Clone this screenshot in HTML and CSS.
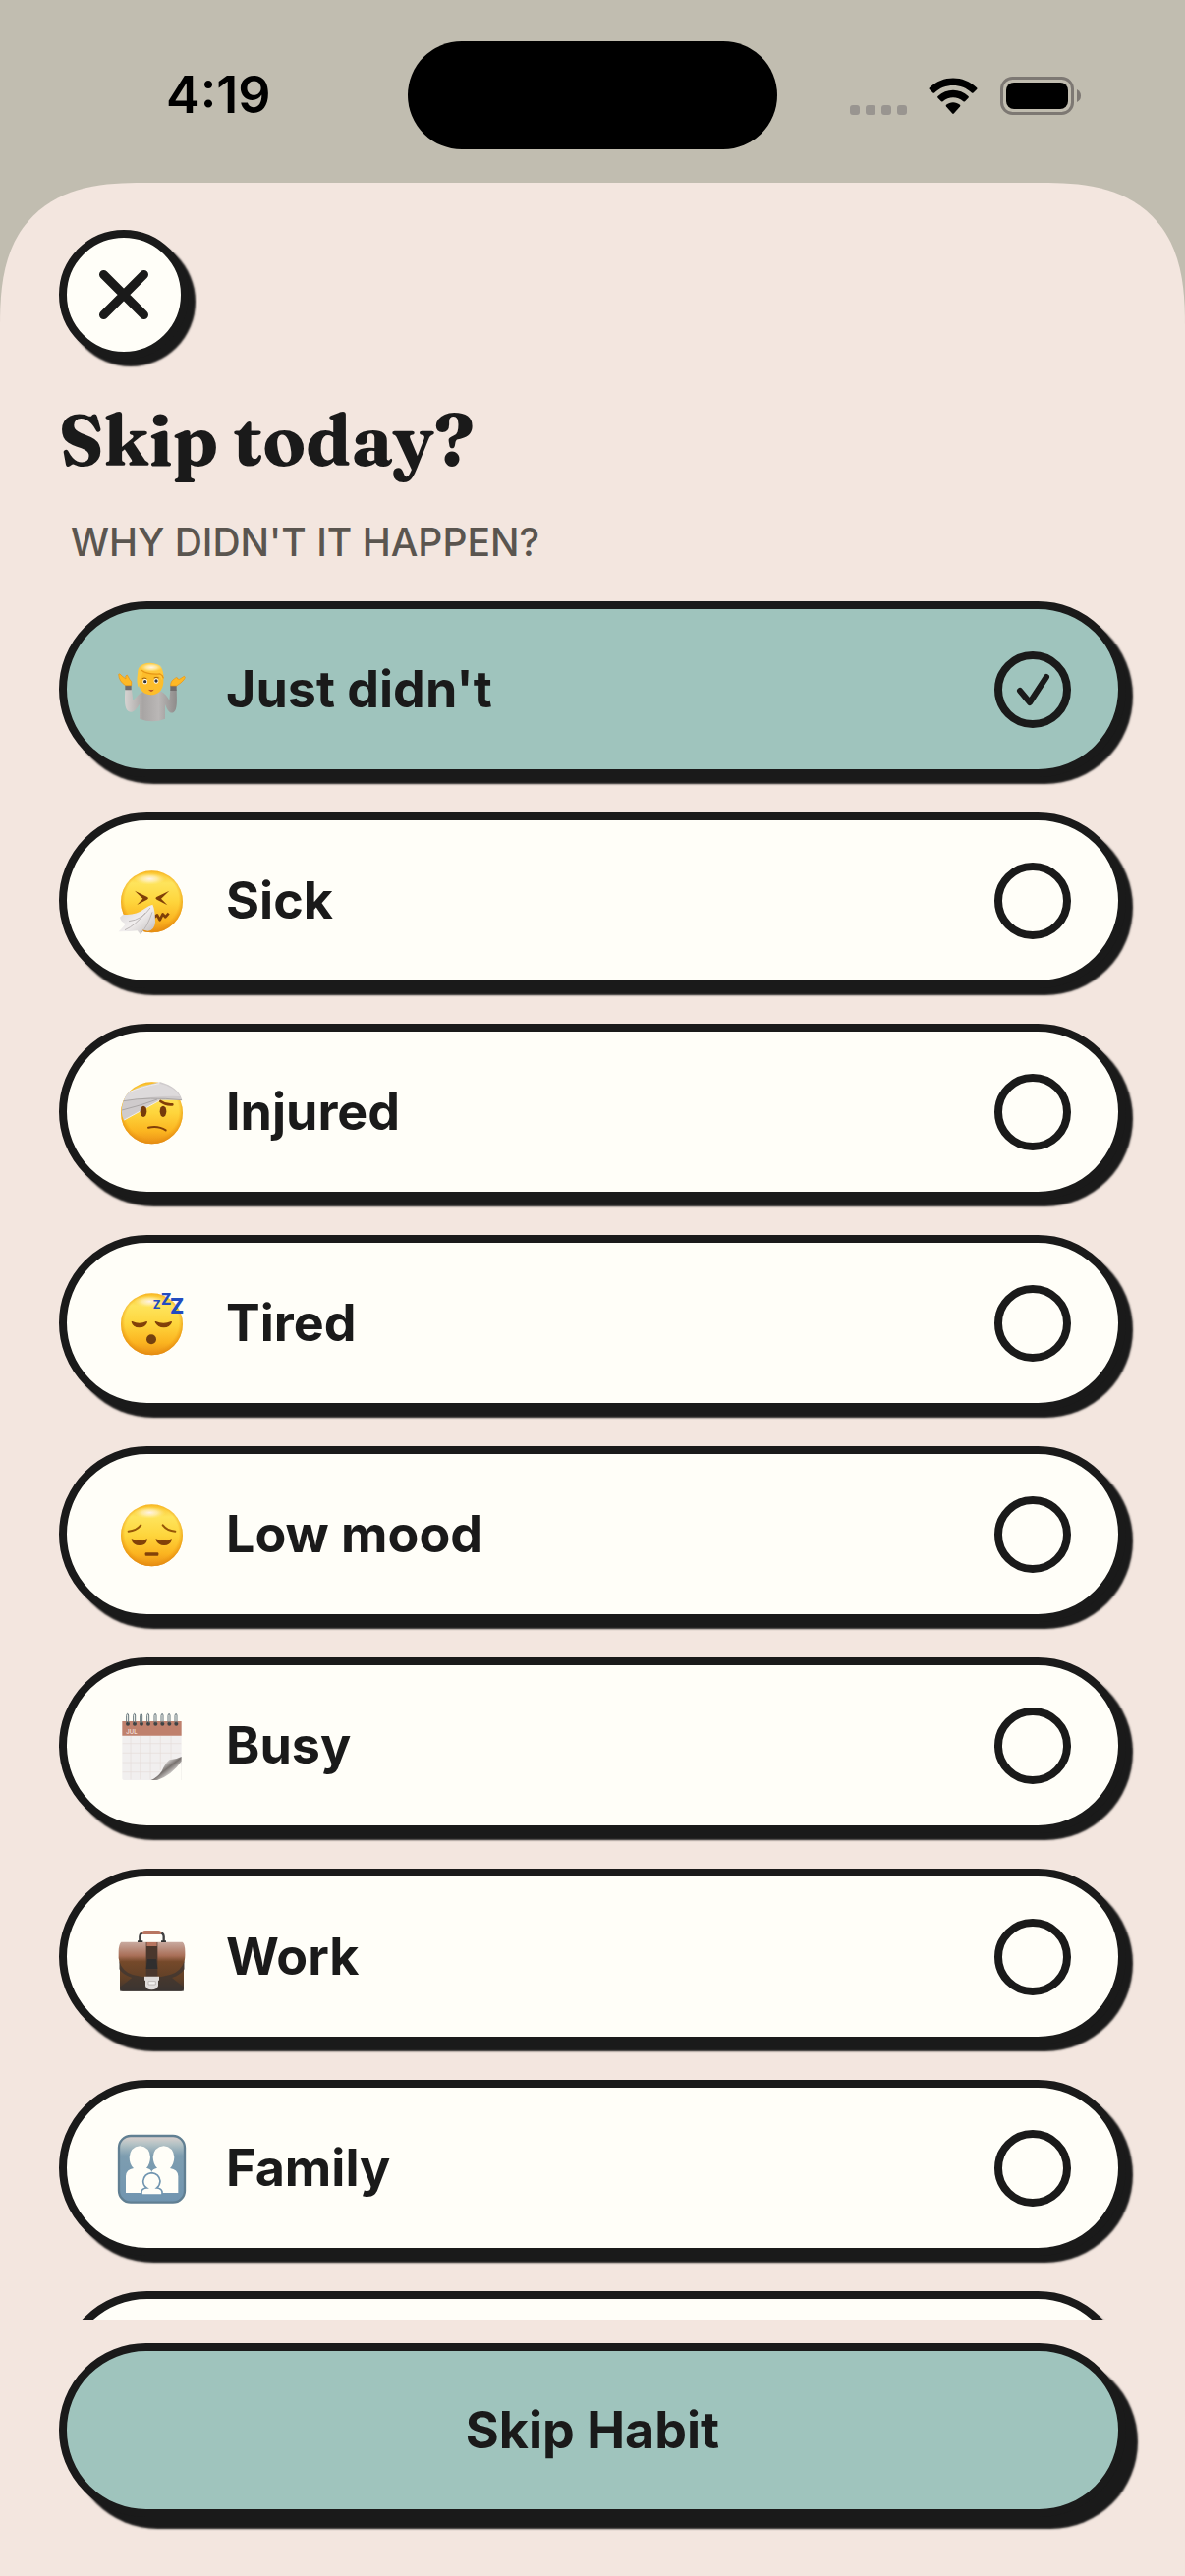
FILE: index.html
```html
<!DOCTYPE html>
<html lang="en">
<head>
<meta charset="utf-8">
<meta name="viewport" content="width=device-width, initial-scale=1">
<title>Skip today?</title>
<link rel="stylesheet" href="styles.css">
</head>
<body>
<div class="screen">
  <header class="status">
    <time class="status-time">4:19</time>
    <div class="island"></div>
    <div class="status-icons">
      <svg class="dots" viewBox="0 0 58 10" aria-hidden="true">
        <rect width="10" height="10" rx="3"/><rect x="16" width="10" height="10" rx="3"/><rect x="32" width="10" height="10" rx="3"/><rect x="48" width="10" height="10" rx="3"/>
      </svg>
      <svg class="wifi" viewBox="0 0 50 38" aria-hidden="true">
        <path d="M1 10.200Q0 11 .9 12L4.500 15.500Q5.300 16.200 6.100 15.400C16.500 5.600 33.500 5.600 43.900 15.400Q44.700 16.200 45.500 15.500L49.100 12Q50 11 49 10.200C35.500-2.700 14.500-2.700 1 10.200Z"/>
        <path d="M9.500 19Q8.600 19.800 9.500 20.700L13 24.200Q13.800 25 14.600 24.200C20.500 19 29.500 19 35.400 24.200Q36.200 25 37 24.200L40.500 20.700Q41.400 19.800 40.500 19C31.500 10.800 18.500 10.800 9.500 19Z"/>
        <path d="M18 27.800Q17.200 28.700 18 29.600L24.200 36.500Q25 37.300 25.800 36.500L32 29.600Q32.800 28.700 32 27.800C28 24.400 22 24.400 18 27.800Z"/>
      </svg>
      <svg class="battery" viewBox="0 0 82 39" aria-hidden="true">
        <rect x="1.500" y="1.500" width="72" height="36" rx="11" fill="none" stroke="#7d7873" stroke-width="3"/>
        <rect x="6" y="6" width="63" height="27" rx="8"/>
        <path d="M78 13Q82 15 82 19.500T78 26Z" fill="#7d7873"/>
      </svg>
    </div>
  </header>

  <main class="sheet">
    <div class="sheet-head">
      <button class="close" type="button" aria-label="Close">
        <svg viewBox="0 0 52 52" aria-hidden="true"><path d="M5.500 5.500 46.500 46.500M46.500 5.500 5.500 46.500"/></svg>
      </button>
      <h1 class="title">Skip today?</h1>
      <p class="caption" id="reason-caption">WHY DIDN'T IT HAPPEN?</p>
    </div>

    <svg class="defs" aria-hidden="true">
      <defs>
        <linearGradient id="face" x1="0" y1="0" x2="0" y2="1">
          <stop offset="0" stop-color="#fbc02a"/><stop offset=".2" stop-color="#fee45c"/><stop offset=".5" stop-color="#fed53c"/><stop offset=".8" stop-color="#fbb420"/><stop offset="1" stop-color="#e98e16"/>
        </linearGradient>
        <radialGradient id="edge" cx=".5" cy=".47" r=".53">
          <stop offset=".82" stop-color="#f09a12" stop-opacity="0"/><stop offset="1" stop-color="#e28a10" stop-opacity=".85"/>
        </radialGradient>
        <radialGradient id="shine">
          <stop offset="0" stop-color="#fff3ea"/><stop offset=".5" stop-color="#fff2c0" stop-opacity=".7"/><stop offset="1" stop-color="#ffec90" stop-opacity="0"/>
        </radialGradient>
        <linearGradient id="shirt" x1="0" x2="1">
          <stop offset="0" stop-color="#d6d3d1"/><stop offset=".35" stop-color="#a8a5a4"/><stop offset=".65" stop-color="#bab7b6"/><stop offset="1" stop-color="#8e8b8a"/>
        </linearGradient>
        <linearGradient id="cloth" x1="0" y1="0" x2="1" y2="1">
          <stop offset="0" stop-color="#d5d2d3"/><stop offset=".5" stop-color="#f1eeee"/><stop offset="1" stop-color="#bdb9b9"/>
        </linearGradient>
        <linearGradient id="curl" x1="0" y1="0" x2="1" y2="1">
          <stop offset=".3" stop-color="#f5f3f2"/><stop offset=".52" stop-color="#77716e"/><stop offset=".7" stop-color="#d9d6d4"/>
        </linearGradient>
        <linearGradient id="leather" x1="0" y1="0" x2="0" y2="1">
          <stop offset="0" stop-color="#c9aaa0"/><stop offset=".28" stop-color="#a96f58"/><stop offset=".4" stop-color="#75492a"/><stop offset=".75" stop-color="#604027"/><stop offset="1" stop-color="#3b3431"/>
        </linearGradient>
        <linearGradient id="tile" x1="0" y1="0" x2="0" y2="1">
          <stop offset="0" stop-color="#ded1cf"/><stop offset=".12" stop-color="#b5c3c5"/><stop offset=".3" stop-color="#7d9db0"/><stop offset="1" stop-color="#7195b0"/>
        </linearGradient>
        <g id="head">
          <circle cx="163.500" cy="172.500" r="94.500" fill="url(#face)"/>
          <circle cx="163.500" cy="172.500" r="94.500" fill="url(#edge)"/>
          <ellipse cx="157" cy="103" rx="48" ry="18" fill="url(#shine)"/>
        </g>
      </defs>
    </svg>

    <div class="reasons" role="radiogroup" aria-labelledby="reason-caption">
      <label class="reason">
        <svg class="emoji" viewBox="48 68 228 228" aria-hidden="true">
          <path d="M82 181C80 215 80 238 91 247 102 256 113 247 126 226V271Q166 286 204 271V227C211 246 220 257 230 251 242 243 240 215 239 181H220L217 214C208 198 198 188 184 185H144C128 190 118 202 106 216L102 181Z" fill="url(#shirt)"/>
          <path d="M82 168H101V183H82ZM220 170H239V185H220Z" fill="#706c6c"/>
          <path d="M83 169Q63 157 62 135 65 130 72 140L84 149Q81 137 88 137L96 151Q104 155 101 169ZM221 170Q220 156 232 149 242 140 242 149L248 150 262 141Q268 143 261 152 254 161 239 170Z" fill="#ffb925" stroke="#e99413" stroke-width="2"/>
          <path d="M141 170H181V188Q161 207 141 188Z" fill="#e49821"/>
          <path d="M123 133Q130 102 160 103 193 105 199 135V161Q194 198 160 198 124 194 124 158Z" fill="#fdbd2b"/>
          <path d="M124 176Q115 163 120 133 119 112 138 104 160 96 180 105 199 111 199 145L194 152Q191 137 166 134 143 132 136 123 135 143 127 151Z" fill="#ffc83c"/>
          <path d="M132 123Q151 137 189 134 197 137 199 147" fill="none" stroke="#e69515" stroke-width="4"/>
          <ellipse cx="162" cy="114" rx="34" ry="13" fill="url(#shine)"/>
          <ellipse cx="143" cy="157" rx="7" ry="8" fill="#fffdf2"/><ellipse cx="177" cy="155" rx="7" ry="8" fill="#fffdf2"/>
          <circle cx="143" cy="157" r="5" fill="#343238"/><circle cx="177" cy="155" r="5" fill="#343238"/>
          <path d="M134 148Q141 144 148 148M170 146Q177 142 185 146" fill="none" stroke="#a06010" stroke-width="3"/>
          <path d="M153 181Q161 184 170 181Q166 188 161 187T153 181Z" fill="#a73c24"/>
        </svg>
        <span class="reason-name">Just didn't</span>
        <span class="mark">
          <input class="radio" type="radio" name="reason" checked>
          <svg class="tick" viewBox="0 0 78 78" aria-hidden="true"><path d="M26 40 36 52 53 26"/></svg>
        </span>
      </label>

      <label class="reason">
        <svg class="emoji" viewBox="48 56 228 228" aria-hidden="true">
          <use href="#head"/>
          <path d="M111 139 150 158Q156 162 149 166L118 182 136 163ZM217 139 178 158Q172 162 179 166L211 183 192 163Z" fill="#803f08"/>
          <path d="M168 222 180 213 188 228 197 210 205 219 215 208" fill="none" stroke="#803f08" stroke-width="8" stroke-linejoin="round"/>
          <path d="M166 181Q174 198 174 235 172 260 151 262L136 258 130 274 119 261Q94 264 62 264 79 248 83 240 68 232 66 220L76 211Q113 215 141 194 155 183 166 181Z" fill="url(#cloth)"/>
          <path d="M159 191Q133 228 93 232M165 204Q151 247 131 268M144 206Q114 244 81 259" fill="none" stroke="#bbb6b6" stroke-width="3"/>
        </svg>
        <span class="reason-name">Sick</span>
        <span class="mark"><input class="radio" type="radio" name="reason"></span>
      </label>

      <label class="reason">
        <svg class="emoji" viewBox="48 56 228 228" aria-hidden="true">
          <use href="#head"/>
          <path d="M94 108Q131 89 190 78 244 93 256 133L188 133 78 195Q66 170 76 139 81 121 94 108Z" fill="#cfcbcc"/>
          <path d="M94 110Q140 91 187 82 231 91 250 122 180 119 78 136 82 120 94 110Z" fill="#dddadb"/>
          <path d="M77 136Q155 122 255 133M72 164Q130 150 180 131" fill="none" stroke="#aaa6a6" stroke-width="3"/>
          <path d="M92 110Q133 92 187 82M79 194 188 134" fill="none" stroke="#f1eeee" stroke-width="3"/>
          <path d="M190 137Q206 149 226 147" fill="none" stroke="#823f08" stroke-width="8" stroke-linecap="round"/>
          <ellipse cx="138" cy="168" rx="10" ry="17" fill="#753b0b"/><ellipse cx="198" cy="168" rx="10" ry="17" fill="#753b0b"/>
          <path d="M153 217Q183 210 206 225" fill="none" stroke="#823f08" stroke-width="6" stroke-linecap="round"/>
        </svg>
        <span class="reason-name">Injured</span>
        <span class="mark"><input class="radio" type="radio" name="reason"></span>
      </label>

      <label class="reason">
        <svg class="emoji" viewBox="48 56 228 228" aria-hidden="true">
          <use href="#head"/>
          <path d="M103 166Q125 176 148 166Q143 181 125 181T103 166ZM175 166Q199 176 223 166Q217 181 200 181T175 166Z" fill="#824109" stroke="#824109" stroke-width="4" stroke-linejoin="round"/>
          <circle cx="162" cy="219" r="15" fill="#74400f"/>
          <g class="snore"><text x="167" y="125" font-size="34">Z</text><text x="192" y="112" font-size="46">Z</text><text x="219" y="141" font-size="63">Z</text></g>
        </svg>
        <span class="reason-name">Tired</span>
        <span class="mark"><input class="radio" type="radio" name="reason"></span>
      </label>

      <label class="reason">
        <svg class="emoji" viewBox="48 56 228 228" aria-hidden="true">
          <use href="#head"/>
          <path d="M92 160Q116 158 130 141M235 160Q210 158 197 141" fill="none" stroke="#965607" stroke-width="6" stroke-linecap="round"/>
          <path d="M103 185Q125 195 148 185Q144 201 126 201T103 185ZM177 185Q199 195 223 185Q218 201 201 201T177 185Z" fill="#824109" stroke="#824109" stroke-width="4" stroke-linejoin="round"/>
          <rect x="143" y="225" width="41" height="10" rx="3" fill="#824109"/>
        </svg>
        <span class="reason-name">Low mood</span>
        <span class="mark"><input class="radio" type="radio" name="reason"></span>
      </label>

      <label class="reason">
        <svg class="emoji" viewBox="48 701 228 228" aria-hidden="true">
          <path d="M73 741H254V918L250 920H77L73 916Z" fill="#f1efef"/>
          <path d="M73 740H254V784H73Z" fill="#bf806c"/>
          <path d="M99 785V918M128 785V918M159 785V918M190 785V890M222 785V858M74 808H253M74 837H253M74 866H222M74 895H190" stroke="#e5dcda" stroke-width="2"/>
          <path d="M254 848V920H160Q181 912 194 892 205 868 217 858 235 858 254 848Z" fill="url(#curl)"/>
          <path d="M254 862V920H180Q225 904 254 862Z" fill="#fffef8"/>
          <text class="month" x="85" y="779" font-size="18">JUL</text>
          <g fill="#3e4244"><circle cx="90" cy="748" r="6"/><circle cx="111" cy="748" r="6"/><circle cx="132" cy="748" r="6"/><circle cx="153" cy="748" r="6"/><circle cx="175" cy="748" r="6"/><circle cx="196" cy="748" r="6"/><circle cx="217" cy="748" r="6"/><circle cx="238" cy="748" r="6"/></g>
          <path d="M86 744V723Q89 711 92 722V745M107 744V723Q110 711 113 722V745M128 744V723Q131 711 134 722V745M149 744V723Q152 711 155 722V745M171 744V723Q174 711 177 722V745M192 744V723Q195 711 198 722V745M213 744V723Q216 711 219 722V745M234 744V723Q237 711 240 722V745" fill="none" stroke="#67777c" stroke-width="3"/>
        </svg>
        <span class="reason-name">Busy</span>
        <span class="mark"><input class="radio" type="radio" name="reason"></span>
      </label>

      <label class="reason">
        <svg class="emoji" viewBox="48 56 228 228" aria-hidden="true">
          <path d="M127 124V107Q128 96 141 95H186Q199 96 200 107V124" fill="none" stroke="#3f3f40" stroke-width="7"/>
          <path d="M133 97Q135 89 144 89H184Q192 89 194 97L188 101H139Z" fill="#b87560"/>
          <path d="M70 124H257Q265 130 265 153 266 176 261 190V266Q261 274 252 274H75Q66 274 66 266V191Q60 172 62 151 63 130 70 124Z" fill="url(#leather)"/>
          <path d="M64 181Q72 213 105 224 132 232 163 232T222 223Q253 213 263 181V207Q252 225 225 233L261 262V274H66V262L103 233Q75 224 64 207Z" fill="#3a3532" opacity=".7"/>
          <path d="M146 125H181V231H146Z" fill="#4a372d"/><path d="M148 125H179V137H148Z" fill="#b77560"/><path d="M150 176H177L181 206H146Z" fill="#302e2e"/>
          <path d="M120 120H136V125H120ZM192 120H207V125H192Z" fill="#333"/>
          <path d="M141 229H186V241H183V258Q179 270 163 270T144 258V241H141Z" fill="#e0dcda"/>
          <path d="M153 244H175V254H153Z" fill="#f4f2f0" stroke="#aaa5a2" stroke-width="2"/>
        </svg>
        <span class="reason-name">Work</span>
        <span class="mark"><input class="radio" type="radio" name="reason"></span>
      </label>

      <label class="reason">
        <svg class="emoji" viewBox="48 700 228 228" aria-hidden="true">
          <rect x="63" y="715" width="201" height="203" rx="36" fill="url(#tile)" stroke="#617f92" stroke-width="7"/>
          <path d="M84 889V838Q85 817 108 814 95 802 95 780 98 749 127 746 157 749 159 780 158 802 147 813 161 816 163 825 165 816 180 813 168 802 167 780 170 749 200 746 229 749 232 780 231 802 219 814 243 817 244 838V889Z" fill="#fffef8"/>
          <path d="M132 895V885Q134 875 148 874 137 867 137 853 140 831 163 828 186 831 189 853 188 867 179 874 192 875 195 885V895Z" fill="#fffef8" stroke="#7195b0" stroke-width="5"/>
        </svg>
        <span class="reason-name">Family</span>
        <span class="mark"><input class="radio" type="radio" name="reason"></span>
      </label>

      <label class="reason">
        <span class="mark"><input class="radio" type="radio" name="reason" aria-label="Other"></span>
      </label>
    </div>

    <footer class="actions">
      <button class="submit" type="button">Skip Habit</button>
    </footer>
  </main>
</div>
</body>
</html>
```
FILE: styles.css
```css
:root {
  --ink: #1a1a1a;
  --paper: #fffef8;
  --sheet: #f3e6df;
  --sage: #9fc4bd;
  --edge: 60px;
}

* {
  box-sizing: border-box;
}

body {
  margin: 0;
  background: #c1bdb0;
  color: var(--ink);
  font-family: Inter, "Liberation Sans", sans-serif;
}

.screen {
  display: flex;
  flex-direction: column;
  height: 100vh;
}

/* Status bar */
.status {
  display: grid;
  grid-template-columns: 1fr 376px 1fr;
  align-items: center;
  padding: 42px 0 34px;
  color: #000;
}

.status-time {
  padding-left: 169px;
  font-size: 52px;
  font-weight: 600;
  line-height: 64px;
}

.island {
  height: 110px;
  border-radius: 55px;
  background: #000;
}

.status-icons {
  display: flex;
  justify-content: flex-end;
  align-items: flex-end;
  padding-right: 106px;
}

.dots {
  width: 58px;
  height: 10px;
  margin-right: 22px;
  fill: #999590;
}

.wifi {
  width: 50px;
  height: 38px;
  margin-right: 23px;
}

.battery {
  width: 82px;
  height: 39px;
}

/* Sheet */
.sheet {
  display: flex;
  flex: 1;
  flex-direction: column;
  min-height: 0;
  padding-top: 48px;
  border-radius: 117px 117px 0 0;
  background: var(--sheet);
}

@supports (corner-shape: superellipse(1.4)) {
  .sheet {
    border-radius: 146px 146px 0 0;
    corner-shape: superellipse(1.4);
  }
}

.sheet-head {
  padding: 0 var(--edge);
}

.close {
  display: grid;
  place-items: center;
  width: 132px;
  height: 132px;
  padding: 0;
  border: 8px solid var(--ink);
  border-radius: 50%;
  background: var(--paper);
  box-shadow: 7px 7px 2px var(--ink);
}

.close svg {
  width: 52px;
  height: 52px;
  fill: none;
  stroke: var(--ink);
  stroke-width: 9;
  stroke-linecap: round;
}

.title {
  margin: 34px 0 0;
  font-family: Fraunces, "Liberation Serif", serif;
  font-size: 72px;
  font-weight: 700;
  line-height: 96px;
}

.caption {
  margin: 32px 0 0;
  padding: 0 12px;
  color: #5a554f;
  font-size: 39px;
  font-weight: 500;
  line-height: 48px;
}

.defs {
  position: absolute;
  width: 0;
  height: 0;
}

/* Reasons */
.reasons {
  display: flex;
  flex: 1;
  flex-direction: column;
  gap: 36px;
  min-height: 0;
  margin-top: 36px;
  padding: 0 var(--edge);
  overflow-y: auto;
  scrollbar-width: none;
}

.reason {
  display: flex;
  flex-shrink: 0;
  align-items: center;
  gap: 38px;
  min-height: 179px;
  padding: 0 48px;
  border: 8px solid var(--ink);
  border-radius: 90px;
  background: var(--paper);
  box-shadow: 7px 7px 2px var(--ink);
}

.reason:has(:checked) {
  background: var(--sage);
}

.emoji {
  flex: none;
  width: 76px;
  height: 76px;
}

.snore {
  fill: #224cc0;
  font-weight: 800;
}

.month {
  fill: #f0ddd6;
  font-weight: 600;
}

.reason-name {
  font-size: 52px;
  font-weight: 700;
  line-height: 64px;
}

.mark {
  display: grid;
  margin-left: auto;
}

.radio,
.tick {
  grid-area: 1 / 1;
  width: 78px;
  height: 78px;
  margin: 0;
}

.radio {
  appearance: none;
  border: 8px solid var(--ink);
  border-radius: 50%;
}

.tick {
  fill: none;
  stroke: var(--ink);
  stroke-width: 6;
  stroke-linecap: round;
  stroke-linejoin: round;
  pointer-events: none;
}

/* Footer */
.actions {
  padding: 24px var(--edge) 60px;
}

.submit {
  display: block;
  width: 100%;
  min-height: 177px;
  border: 8px solid var(--ink);
  border-radius: 90px;
  background: var(--sage);
  box-shadow: 12px 12px 2px var(--ink);
  color: var(--ink);
  font-family: inherit;
  font-size: 52px;
  font-weight: 700;
  line-height: 64px;
}
```
